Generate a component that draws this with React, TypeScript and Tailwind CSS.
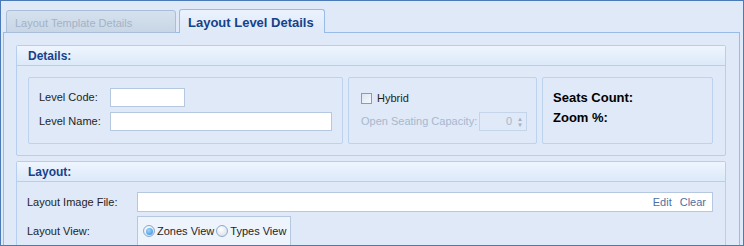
import React from 'react';

const Radio = ({ checked }: { checked?: boolean }) => (
    <span className="w-[12px] h-[12px] rounded-full border border-[#8fa9cc] bg-[radial-gradient(circle_at_40%_35%,#ffffff,#cfdbea)] flex items-center justify-center shrink-0">
        {checked && <span className="w-[7px] h-[7px] rounded-full bg-[radial-gradient(circle_at_40%_35%,#9fd4fb,#2f8ee0)]" />}
    </span>
);

const GroupHeader = ({ title }: { title: string }) => (
    <div className="h-[20px] border-b border-[#b7cfee] bg-gradient-to-b from-[#eef5fe] to-[#dce9f9] pl-[11px] flex items-center text-[12px] font-bold text-[#15428b]">
        {title}
    </div>
);

export default function App() {
    return (
        <div className="w-[744px] h-[246px] overflow-hidden border border-[#4a7ab8] bg-[#dfe9f7] font-['Liberation_Sans',Arial,sans-serif] text-[11px] text-[#1e1e1e]">
            {/* Tabs */}
            <div className="relative z-10 -mb-px flex items-end h-[32px] pl-[5px] gap-[3px]">
                <div className="w-[170px] h-[23px] rounded-t-[3px] border border-[#a9bed8] bg-gradient-to-b from-[#d6e1ee] to-[#c8d6e6] pl-[8px] pt-[4px] text-[11px] text-[#a3b3c7]">
                    Layout Template Details
                </div>
                <div className="w-[146px] h-[24px] rounded-t-[3px] border border-b-0 border-[#99bbe8] bg-gradient-to-b from-[#eaf2fd] to-[#dfe9f7] pl-[8px] pt-[3px] text-[13px] font-bold text-[#15428b]">
                    Layout Level Details
                </div>
            </div>

            {/* Tab panel */}
            <div className="ml-[2px] w-[737px] h-[260px] border border-[#99bbe8] px-[12px] pt-[12px]">
                {/* Details */}
                <div className="w-[710px] border border-[#b7cfee] rounded-[2px]">
                    <GroupHeader title="Details:" />
                    <div className="flex gap-[5px] px-[11px] pt-[11px] pb-[11px]">
                        <div className="w-[315px] h-[67px] border border-[#bdd2ee] rounded-[2px] pl-[10px] pt-[10px] flex flex-col gap-[5px]">
                            <div className="flex items-center h-[19px]">
                                <span className="w-[71px]">Level Code:</span>
                                <span className="w-[75px] h-[19px] border border-[#b5c8e0] bg-white" />
                            </div>
                            <div className="flex items-center h-[19px]">
                                <span className="w-[71px]">Level Name:</span>
                                <span className="w-[222px] h-[19px] border border-[#b5c8e0] bg-white" />
                            </div>
                        </div>

                        <div className="w-[189px] h-[67px] border border-[#bdd2ee] rounded-[2px] pl-[12px] pt-[15px]">
                            <div className="flex items-center h-[11px] gap-[5px]">
                                <span className="w-[11px] h-[11px] border border-[#7f9dc6] bg-gradient-to-br from-[#dbe5f1] to-[#f6f9fd]" />
                                <span>Hybrid</span>
                            </div>
                            <div className="flex items-center mt-[8px] h-[19px] text-[#a7b8cf]">
                                <span className="w-[118px]">Open Seating Capacity:</span>
                                <span className="w-[48px] h-[19px] border border-[#c3d4eb] flex items-center justify-end pr-[3px] gap-[5px]">
                                    <span>0</span>
                                    <span className="flex flex-col items-center leading-none text-[6px] text-[#9fb0c6]">
                                        <span>▲</span>
                                        <span>▼</span>
                                    </span>
                                </span>
                            </div>
                        </div>

                        <div className="w-[171px] h-[67px] border border-[#bdd2ee] rounded-[2px] pl-[10px] pt-[10px] text-[13px] font-bold text-black leading-[20px]">
                            <div>Seats Count:</div>
                            <div>Zoom %:</div>
                        </div>
                    </div>
                </div>

                {/* Layout */}
                <div className="mt-[5px] w-[710px] h-[120px] border border-[#b7cfee] rounded-[2px]">
                    <GroupHeader title="Layout:" />
                    <div className="pl-[10px] pt-[10px]">
                        <div className="flex items-center h-[20px]">
                            <span className="w-[110px]">Layout Image File:</span>
                            <span className="w-[576px] h-[20px] border border-[#b5c8e0] bg-white flex items-center justify-end pr-[6px] gap-[8px] text-[#4d6fa3]">
                                <span>Edit</span>
                                <span>Clear</span>
                            </span>
                        </div>
                        <div className="flex items-center mt-[4px]">
                            <span className="w-[110px]">Layout View:</span>
                            <span className="w-[154px] h-[30px] border border-[#b5c8e0] bg-[#eef4fc] flex items-center pl-[5px] gap-[2px]">
                                <Radio checked />
                                <span>Zones View</span>
                                <Radio />
                                <span>Types View</span>
                            </span>
                        </div>
                    </div>
                </div>
            </div>
        </div>
    );
}
